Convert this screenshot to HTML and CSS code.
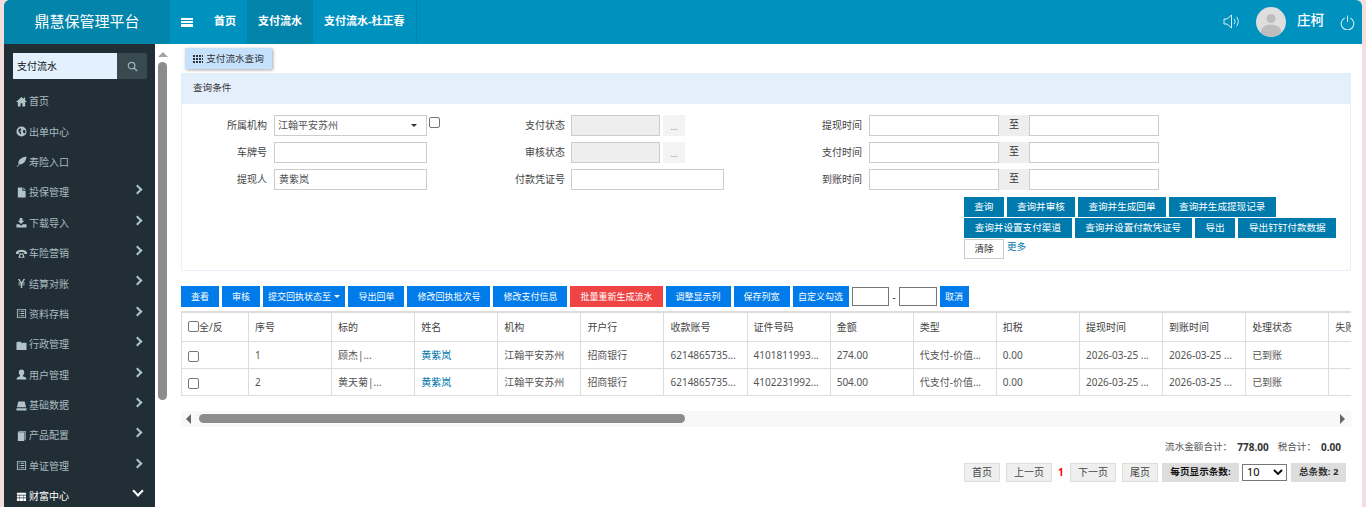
FILE: index.html
```html
<!DOCTYPE html>
<html lang="zh-CN">
<head>
<meta charset="utf-8">
<title>鼎慧保管理平台</title>
<link rel="stylesheet" href="styles.css">
</head>
<body>
<div class="app">
  <header class="topbar">
    <div class="logo">鼎慧保管理平台</div>
    <div class="burger"><i></i><i></i><i></i></div>
    <nav class="tabs">
      <a class="tab">首页</a>
      <a class="tab active">支付流水</a>
      <a class="tab">支付流水-杜正春</a>
    </nav>
    <div class="top-right">
      <svg class="speaker" viewBox="0 0 17 15"><path d="M1 5h3L8.500 1v13L4 10H1z M11 4.800c1.300 1.700 1.300 3.700 0 5.400 M13.500 2.800c2.300 3 2.300 6.400 0 9.400" fill="none" stroke="#d5f0fa" stroke-width="1"/></svg>
      <div class="avatar"><svg viewBox="0 0 30 30"><circle cx="15" cy="11.500" r="4.500" fill="#bdbdbd"/><ellipse cx="15" cy="24.500" rx="10" ry="7" fill="#bdbdbd"/></svg></div>
      <span class="user">庄柯</span>
      <svg class="power" viewBox="0 0 16 16"><path d="M5 3.200a6.700 6.700 0 1 0 6 0 M8 .5v7" fill="none" stroke="#d5eef7" stroke-width="1.100"/></svg>
    </div>
  </header>
  <div class="below">
    <aside class="sidebar">
      <div class="search"><span class="search-input">支付流水</span><span class="search-btn"><svg viewBox="0 0 12 12"><circle cx="5" cy="5" r="3.600" fill="none" stroke="#9db1b6" stroke-width="1.400"/><path d="M7.700 7.700L11 11" stroke="#9db1b6" stroke-width="1.600"/></svg></span></div>
      <ul class="menu">
        <li><svg viewBox="0 0 12 12"><path d="M6 1L0 6.500h2V11.500h3V8h2v3.500h3V6.500h2L10 4.700V1.500H8.500v1.800z"/></svg>首页</li>
        <li><svg viewBox="0 0 12 12"><circle cx="6" cy="6" r="5.500"/><path d="M3 3.500l2-1 1 1.500-1.500 1.500 1 1.500v2.500L4 7.500 2.500 5.500zM8 4l2 .5.500 2L9 8.500 7.500 6.500z" fill="#212e35"/></svg>出单中心</li>
        <li><svg viewBox="0 0 12 12"><path d="M11.500.5C5 1.500 1.500 5 3 9c4.500 1 8-3 8.500-8.500zM9 3L3.500 8.500l.5.500L9.500 3.500zM.8 11.500L3.500 8.500l.5.500L1.500 12z"/></svg>寿险入口</li>
        <li class="more"><svg viewBox="0 0 12 12"><path d="M2 .5h5v3.500h3.500v7.500H2zM8 .5l2.500 2.500H8z"/></svg>投保管理</li>
        <li class="more"><svg viewBox="0 0 12 12"><path d="M4 1h3v3h2L5.500 7.500 2 4h2zM.5 8h3l2 1.500 2-1.500h4v3.500H.5z"/></svg>下载导入</li>
        <li class="more"><svg viewBox="0 0 12 12"><path d="M0 5c1-4 11-4 12 0v1.500H9V5C8 4 4 4 3 5v1.500H0zM2.500 10.500L4 6h4l1.500 4.500zM6 7a1.500 1.500 0 1 0 .01 0"/></svg>车险营销</li>
        <li class="more"><svg viewBox="0 0 12 12"><path d="M2 1h1.800L6 4.500 8.200 1H10L7.500 5H9.500v1H6.800v1H9.500v1H6.800v3H5.200V8H2.500V7h2.700V6H2.500V5h2z"/></svg>结算对账</li>
        <li class="more"><svg viewBox="0 0 12 12"><path fill-rule="evenodd" d="M1 1h10v10H1zM2 2v8h8V2zM3 3h1v1H3zM5 3h4v1H5zM3 5.500h1v1H3zM5 5.500h4v1H5zM3 8h1v1H3zM5 8h4v1H5z"/></svg>资料存档</li>
        <li class="more"><svg viewBox="0 0 12 12"><path d="M.5 3.500h1V3h4v1h6v8H.5z"/></svg>行政管理</li>
        <li class="more"><svg viewBox="0 0 12 12"><path d="M6 .5c2 0 3 1.500 3 3 0 1.500-.8 3-1.500 3.500v1c2 .5 4 1.200 4 3.500H.5c0-2.300 2-3 4-3.500V7C3.800 6.500 3 5 3 3.500 3 2 4 .5 6 .5z"/></svg>用户管理</li>
        <li class="more"><svg viewBox="0 0 12 12"><path d="M2.500 1.500h7L11 8H1zM.5 9h11v2.500H.5z"/></svg>基础数据</li>
        <li class="more"><svg viewBox="0 0 12 12"><path d="M2 2.500L3.500 1H10.500v9.500H9.500V2H3.500L3 2.500h6V12H2z"/></svg>产品配置</li>
        <li class="more"><svg viewBox="0 0 12 12"><path fill-rule="evenodd" d="M1 1h10v10H1zM2 2v8h8V2zM3 3h1v1H3zM5 3h4v1H5zM3 5.500h1v1H3zM5 5.500h4v1H5zM3 8h1v1H3zM5 8h4v1H5z"/></svg>单证管理</li>
        <li class="open"><svg viewBox="0 0 12 12"><path d="M1 2h10v2H1zM1 5h2.800v2H1zM4.200 5h3.500v2H4.200zM8.100 5H11v2H8.100zM1 8h2.800v3H1zM4.200 8h3.500v3H4.200zM8.100 8H11v3H8.100z"/></svg>财富中心</li>
      </ul>
    </aside>
    <div class="vscroll"><span class="arrow-up"></span><span class="vthumb"></span></div>
    <main class="main">
      <div class="page-tab"><svg viewBox="0 0 10 8"><path d="M0 0h2v2H0zM3 0h2v2H3zM6 0h2v2H6zM9 0h1v2H9zM0 3h2v2H0zM3 3h2v2H3zM6 3h2v2H6zM9 3h1v2H9zM0 6h2v2H0zM3 6h2v2H3zM6 6h2v2H6zM9 6h1v2H9z"/></svg>支付流水查询</div>
      <section class="panel">
        <div class="panel-head">查询条件</div>
        <div class="panel-body">
          <div class="fields">
            <div class="col col1">
              <div class="field"><label>所属机构</label><span class="input select">江翰平安苏州<b class="caret"></b></span><span class="box"></span></div>
              <div class="field"><label>车牌号</label><span class="input"></span></div>
              <div class="field"><label>提现人</label><span class="input">黄紫岚</span></div>
            </div>
            <div class="col col2">
              <div class="field"><label>支付状态</label><span class="input off"></span><span class="dots">...</span></div>
              <div class="field"><label>审核状态</label><span class="input off"></span><span class="dots">...</span></div>
              <div class="field"><label>付款凭证号</label><span class="input wide"></span></div>
            </div>
            <div class="col col3">
              <div class="field"><label>提现时间</label><span class="input"></span><span class="to">至</span><span class="input"></span></div>
              <div class="field"><label>支付时间</label><span class="input"></span><span class="to">至</span><span class="input"></span></div>
              <div class="field"><label>到账时间</label><span class="input"></span><span class="to">至</span><span class="input"></span></div>
            </div>
          </div>
          <div class="actions">
            <a class="btn tight">查询</a><a class="btn tight">查询并审核</a><a class="btn tight">查询并生成回单</a><a class="btn tight">查询并生成提现记录</a>
            <a class="btn">查询并设置支付渠道</a><a class="btn">查询并设置付款凭证号</a><a class="btn">导出</a><a class="btn">导出钉钉付款数据</a>
            <a class="btn plain">清除</a><a class="link">更多</a>
          </div>
        </div>
      </section>
      <div class="toolbar">
        <a class="tbtn">查看</a><a class="tbtn">审核</a><a class="tbtn drop">提交回执状态至<b class="caret white"></b></a><a class="tbtn">导出回单</a><a class="tbtn">修改回执批次号</a><a class="tbtn">修改支付信息</a><a class="tbtn red">批量重新生成流水</a><a class="tbtn">调整显示列</a><a class="tbtn">保存列宽</a><a class="tbtn narrow">自定义勾选</a>
        <span class="range"></span><span class="dash">-</span><span class="range"></span>
        <a class="tbtn narrow">取消</a>
      </div>
      <div class="table-wrap">
        <table class="grid">
          <colgroup><col class="c-first"><col class="c"><col class="c"><col class="c"><col class="c"><col class="c"><col class="c"><col class="c"><col class="c"><col class="c"><col class="c"><col class="c"><col class="c"><col class="c"><col class="c"></colgroup>
          <thead><tr><th><span class="box"></span>全/反</th><th>序号</th><th>标的</th><th>姓名</th><th>机构</th><th>开户行</th><th>收款账号</th><th>证件号码</th><th>金额</th><th>类型</th><th>扣税</th><th>提现时间</th><th>到账时间</th><th>处理状态</th><th>失败原因</th></tr></thead>
          <tbody>
            <tr><td><span class="box"></span></td><td>1</td><td>顾杰|...</td><td><a class="name">黄紫岚</a></td><td>江翰平安苏州</td><td>招商银行</td><td>6214865735...</td><td>4101811993...</td><td>274.00</td><td>代支付-价值...</td><td>0.00</td><td>2026-03-25 ...</td><td>2026-03-25 ...</td><td>已到账</td><td></td></tr>
            <tr><td><span class="box"></span></td><td>2</td><td>黄天菊|...</td><td><a class="name">黄紫岚</a></td><td>江翰平安苏州</td><td>招商银行</td><td>6214865735...</td><td>4102231992...</td><td>504.00</td><td>代支付-价值...</td><td>0.00</td><td>2026-03-25 ...</td><td>2026-03-25 ...</td><td>已到账</td><td></td></tr>
          </tbody>
        </table>
      </div>
      <div class="hscroll"><span class="arrow-left"></span><span class="hthumb"></span><span class="arrow-right"></span></div>
      <div class="totals"><span>流水金额合计：</span><b>778.00</b><span class="tax">税合计：</span><b>0.00</b></div>
      <div class="pager">
        <a class="pg">首页</a><a class="pg">上一页</a><span class="cur">1</span><a class="pg">下一页</a><a class="pg">尾页</a>
        <span class="pg-info strong">每页显示条数:</span>
        <span class="pg-select">10<svg viewBox="0 0 10 6"><path d="M1 1l4 4 4-4" fill="none" stroke="#000" stroke-width="1.800"/></svg></span>
        <span class="pg-info">总条数: 2</span>
      </div>
    </main>
  </div>
</div>
</body>
</html>
```
FILE: styles.css
```css
* { box-sizing: border-box; }
html, body { margin: 0; height: 507px; overflow: hidden; }
body { background: #f2dede; font: 10px/1.2 "Noto Sans", "Noto Sans CJK SC", sans-serif; color: #333; }
.app { margin: 0 4px 0 4px; height: 507px; background: #fff; border-radius: 6px 6px 0 0; overflow: hidden; display: flex; flex-direction: column; }

.topbar { height: 44px; background: #0092bf; color: #fff; display: flex; align-items: center; flex: none; }
.logo { width: 166px; height: 44px; background: #0284ab; font-size: 15px; line-height: 42px; text-align: center; flex: none; }
.burger { width: 33px; display: flex; flex-direction: column; gap: 1px; padding-left: 11px; }
.burger i { display: block; width: 12px; height: 2px; background: #fff; }
.burger i:last-child { height: 3px; }
.tabs { display: flex; height: 44px; border-right: 1px solid #0284ab; }
.tab { padding: 0 11px; font-size: 11px; font-weight: 700; line-height: 42px; }
.tab.active { background: #0284ab; }
.top-right { margin-left: auto; display: flex; align-items: center; height: 44px; }
.speaker { width: 17px; height: 15px; margin-right: 16px; margin-bottom: 1px; }
.avatar { width: 30px; height: 30px; border-radius: 50%; background: #dedede; overflow: hidden; margin-right: 11px; }
.avatar svg { display: block; width: 30px; height: 30px; }
.user { font-size: 13.500px; font-weight: 500; width: 43px; margin-bottom: 4px; }
.power { width: 15px; height: 15px; margin-right: 7px; }

.below { flex: 1; display: flex; min-height: 0; }
.sidebar { width: 151px; background: #212e35; flex: none; overflow: hidden; padding-top: 9px; }
.search { display: flex; height: 26px; margin: 0 8px 0 9px; background: #38494f; border-radius: 2px; }
.search-input { width: 104px; background: #e3f0fe; color: #111; line-height: 26px; padding-left: 4px; }
.search-btn { flex: 1; display: flex; align-items: center; justify-content: center; }
.search-btn svg { width: 11px; height: 11px; }
.menu { list-style: none; margin: 7px 0 0; padding: 0; color: #a9bcc2; }
.menu li { height: 30.400px; display: flex; align-items: center; padding-left: 12px; position: relative; }
.menu svg { width: 11px; height: 11px; fill: #b0c4c9; margin-right: 2px; flex: none; }
.menu .more::after { content: ""; position: absolute; right: 14px; top: 9px; width: 5px; height: 5px; border: solid #a9c5ce; border-width: 2px 2px 0 0; transform: rotate(45deg); }
.menu .open { color: #fff; }
.menu .open svg { fill: #fff; }
.menu .open::after { content: ""; position: absolute; right: 13px; top: 6px; width: 6px; height: 6px; border: solid #fff; border-width: 0 2.500px 2.500px 0; transform: rotate(45deg); }

.vscroll { width: 15px; flex: none; background: #fff; position: relative; padding: 8px 3px 0 3px; }
.arrow-up { display: block; width: 0; margin: 0 auto 5px; border: solid transparent; border-width: 0 5px 5px; border-bottom-color: #a3a3a3; }
.vthumb { display: block; height: 338px; background: #8c8c8c; border-radius: 5px; }

.main { flex: 1; min-width: 0; padding: 4px 11px 0 11px; }
.page-tab { margin-left: 4px; width: 87px; height: 21px; background: #c5e1fb; box-shadow: 1px 1px 3px rgba(0,0,0,.35); display: flex; align-items: center; justify-content: center; gap: 3px; font-size: 9.600px; }
.page-tab svg { width: 10px; height: 8px; fill: #333; }
.panel { margin-top: 4px; height: 198px; border: 1px solid #e8f1fa; }
.panel-head { height: 31px; background: #e3f0fc; line-height: 29px; padding-left: 12px; font-size: 9.600px; margin: -1px -1px 0; }
.panel-body { padding-top: 11px; }
.fields { display: flex; }
.col { display: flex; flex-direction: column; gap: 6px; }
.col1 { width: 320px; }
.col2 { width: 320px; }
.field { display: flex; align-items: flex-start; height: 21px; }
.field label { text-align: right; line-height: 21px; margin-right: 7px; color: #444; flex: none; }
.col1 label { width: 85px; }
.col2 label { width: 63px; margin-right: 6px; }
.col3 label { width: 40px; }
.input { display: block; height: 21px; border: 1px solid #ccc; background: #fff; padding: 0 4px; line-height: 19px; width: 153px; color: #555; flex: none; position: relative; }
.input.off { width: 89px; background: #eee; }
.input.wide { width: 153px; }
.col3 .input { width: 130px; }
.select { padding-left: 3px; }
.caret { position: absolute; right: 9px; top: 8px; border: solid transparent; border-width: 3px 3px 0; border-top-color: #333; }
.col1 .box { margin: 2px 0 0 2px; }
.box { display: inline-block; width: 11px; height: 11px; border: 1px solid #767676; border-radius: 2px; background: #fff; vertical-align: middle; flex: none; }
.dots { width: 22px; height: 21px; margin-left: 3px; background: #f3f3f3; text-align: center; line-height: 23px; color: #777; font-size: 8px; }
.to { width: 30px; height: 21px; background: #eee; text-align: center; line-height: 19px; flex: none; }
.actions { display: flex; flex-wrap: wrap; gap: 1px 3px; width: 375px; margin: 7px 0 0 782px; }
.btn { height: 20px; padding: 0 10.650px; background: #007aad; color: #fff; font-size: 9.600px; line-height: 19px; white-space: nowrap; }
.btn.tight { padding: 0 10.250px; }
.btn.plain { background: #fff; color: #333; border: 1px solid #ccc; padding: 0 9.400px; line-height: 18px; }
.link { color: #0078ad; font-size: 9.600px; line-height: 16px; }

.toolbar { display: flex; align-items: center; gap: 3px; margin-top: 15px; height: 21px; }
.tbtn { height: 21px; padding: 0 10px; background: #007bea; color: #fff; font-size: 9px; line-height: 21px; white-space: nowrap; position: relative; flex: none; }
.tbtn.red { background: #ef4444; }
.tbtn.narrow { padding: 0 5.500px; }
.tbtn.drop { padding: 0 5.400px 0 5px; }
.tbtn .caret.white { position: static; display: inline-block; margin-left: 3px; vertical-align: 2px; border-top-color: #fff; }
.range { width: 37.500px; height: 19px; border: 1px solid #767676; background: #fff; flex: none; }
.dash { width: 4px; text-align: center; }

.table-wrap { margin-top: 4px; overflow: hidden; }
.grid { border-collapse: collapse; table-layout: fixed; width: 1229px; }
.c-first { width: 67px; }
.c { width: 83.100px; }
.grid th, .grid td { border: 1px solid #ddd; text-align: left; font-weight: 400; padding: 0 6px; white-space: nowrap; overflow: hidden; color: #444; }
.grid td { color: #555; height: 27px; }
.grid th { height: 29px; }
.grid th .box { margin-top: -3px; }
.grid td .box { margin-top: 3px; }
.grid thead tr th { border-top: 2px solid #ddd; }
.name { color: #0078ad; }

.hscroll { height: 16px; margin-top: 15px; background: #f8f8f8; position: relative; display: flex; align-items: center; padding-left: 18px; }
.hthumb { width: 486px; height: 9px; border-radius: 5px; background: #8c8c8c; }
.arrow-left, .arrow-right { position: absolute; top: 3px; border: solid transparent; border-width: 5px; }
.arrow-left { left: 0; border-right-color: #666; border-left-width: 0; margin-left: 5px; }
.arrow-right { right: 6px; border-left-color: #666; border-right-width: 0; }

.totals { display: flex; justify-content: flex-end; align-items: center; margin-top: 14px; padding-right: 10px; height: 12px; color: #555; font-size: 9.600px; }
.totals b { color: #333; margin-left: 5px; font-size: 10px; }
.totals .tax { margin-left: 9px; }
.pager { display: flex; align-items: center; margin-top: 10px; margin-left: 783px; height: 19px; }
.pg { height: 19px; padding: 0 7px; background: #efefef; border: 1px solid #ddd; line-height: 17px; margin-right: 6px; color: #444; flex: none; }
.cur { color: #f00; font-weight: 700; width: 12px; }
.pg-info { background: #ddd; height: 19px; line-height: 18px; padding: 0 8px; font-weight: 700; font-size: 9.600px; white-space: nowrap; flex: none; }
.pg-info.strong { margin-left: -2px; color: #111; padding: 0; width: 77px; text-align: center; }
.pg-select { width: 45px; height: 17px; border: 1px solid #767676; margin: 0 4px 0 3px; display: flex; align-items: center; justify-content: space-between; padding: 0 3px 0 4px; color: #000; font-size: 11px; flex: none; }
.pg-select svg { width: 10px; height: 6px; }
```
